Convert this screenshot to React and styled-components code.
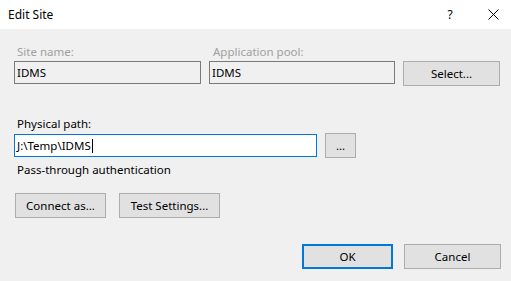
import React from 'react';
import styled, { createGlobalStyle } from 'styled-components';

const GlobalStyle = createGlobalStyle`
  html, body { margin: 0; padding: 0; }
  body {
    width: 511px;
    height: 281px;
    overflow: hidden;
    background: #f0f0f0;
    font-family: "Noto Sans", "Open Sans", sans-serif;
    font-size: 11.5px;
    color: #000;
  }
`;

const Dialog = styled.div`
  width: 511px;
  height: 281px;
  display: flex;
  flex-direction: column;
  background: #f0f0f0;
`;

const TitleBar = styled.div`
  height: 29px;
  background: #fff;
  display: flex;
  align-items: center;
  padding-left: 8px;
  padding-right: 5px;
  font-size: 12px;
`;

const Title = styled.div`
  flex: 1;
`;

const TitleButton = styled.div`
  width: ${p => p.w}px;
  display: flex;
  justify-content: center;
  align-items: center;
  font-size: 12px;
`;

const Body = styled.div`
  flex: 1;
  display: flex;
  flex-direction: column;
  padding: 15px 10px 0 14px;
`;

const TopGrid = styled.div`
  display: grid;
  grid-template-columns: 187px 186px 97px;
  column-gap: 8px;
  row-gap: 1px;
  align-items: start;
`;

const Label = styled.div`
  height: 16px;
  line-height: 16px;
  padding-left: ${p => p.indent || 3}px;
  color: ${p => (p.disabled ? '#a0a0a0' : '#000')};
`;

const TextBox = styled.div`
  box-sizing: border-box;
  height: 23px;
  padding-left: 2px;
  display: flex;
  align-items: center;
  border: 1px solid ${p => (p.focused ? '#0078d7' : '#7a7a7a')};
  background: ${p => (p.focused ? '#fff' : '#f0f0f0')};
`;

const Caret = styled.span`
  display: inline-block;
  width: 1px;
  height: 14px;
  background: #000;
  margin-left: 1px;
`;

const Button = styled.div`
  box-sizing: border-box;
  width: ${p => p.w}px;
  height: 25px;
  display: flex;
  align-items: center;
  justify-content: center;
  background: #e1e1e1;
  border: ${p => (p.isDefault ? '2px solid #0078d7' : '1px solid #adadad')};
`;

const PathLabel = styled(Label)`
  margin-top: 30px;
  margin-bottom: 1px;
`;

const PathRow = styled.div`
  display: grid;
  grid-template-columns: 303px 31px;
  column-gap: 8px;
  align-items: center;
`;

const Note = styled.div`
  margin-top: 4px;
  height: 16px;
  line-height: 16px;
  padding-left: 3px;
`;

const ButtonRow = styled.div`
  display: flex;
  gap: ${p => p.gap}px;
  margin-top: ${p => p.top}px;
  padding-left: ${p => p.left || 0}px;
  justify-content: ${p => (p.right ? 'flex-end' : 'flex-start')};
`;

const CloseIcon = () => (
  <svg width="11" height="11" viewBox="0 0 11 11">
    <path d="M0.5 0.5 L10.5 10.5 M10.5 0.5 L0.5 10.5" stroke="#000" strokeWidth="1" fill="none" />
  </svg>
);

export default function App() {
  return (
    <Dialog>
      <GlobalStyle />
      <TitleBar>
        <Title>Edit Site</Title>
        <TitleButton w={20}>?</TitleButton>
        <TitleButton w={26} style={{ marginLeft: 20 }}>
          <CloseIcon />
        </TitleButton>
      </TitleBar>
      <Body>
        <TopGrid>
          <Label disabled>Site name:</Label>
          <Label disabled indent={4}>Application pool:</Label>
          <div />
          <TextBox>IDMS</TextBox>
          <TextBox>IDMS</TextBox>
          <Button w={97}>Select...</Button>
        </TopGrid>

        <PathLabel>Physical path:</PathLabel>
        <PathRow>
          <TextBox focused>
            J:\Temp\IDMS<Caret />
          </TextBox>
          <Button w={31}>...</Button>
        </PathRow>

        <Note>Pass-through authentication</Note>

        <ButtonRow gap={13} top={15} left={1}>
          <Button w={91}>Connect as...</Button>
          <Button w={101}>Test Settings...</Button>
        </ButtonRow>

        <ButtonRow gap={11} top={26} right>
          <Button w={91} isDefault>OK</Button>
          <Button w={97}>Cancel</Button>
        </ButtonRow>
      </Body>
    </Dialog>
  );
}
